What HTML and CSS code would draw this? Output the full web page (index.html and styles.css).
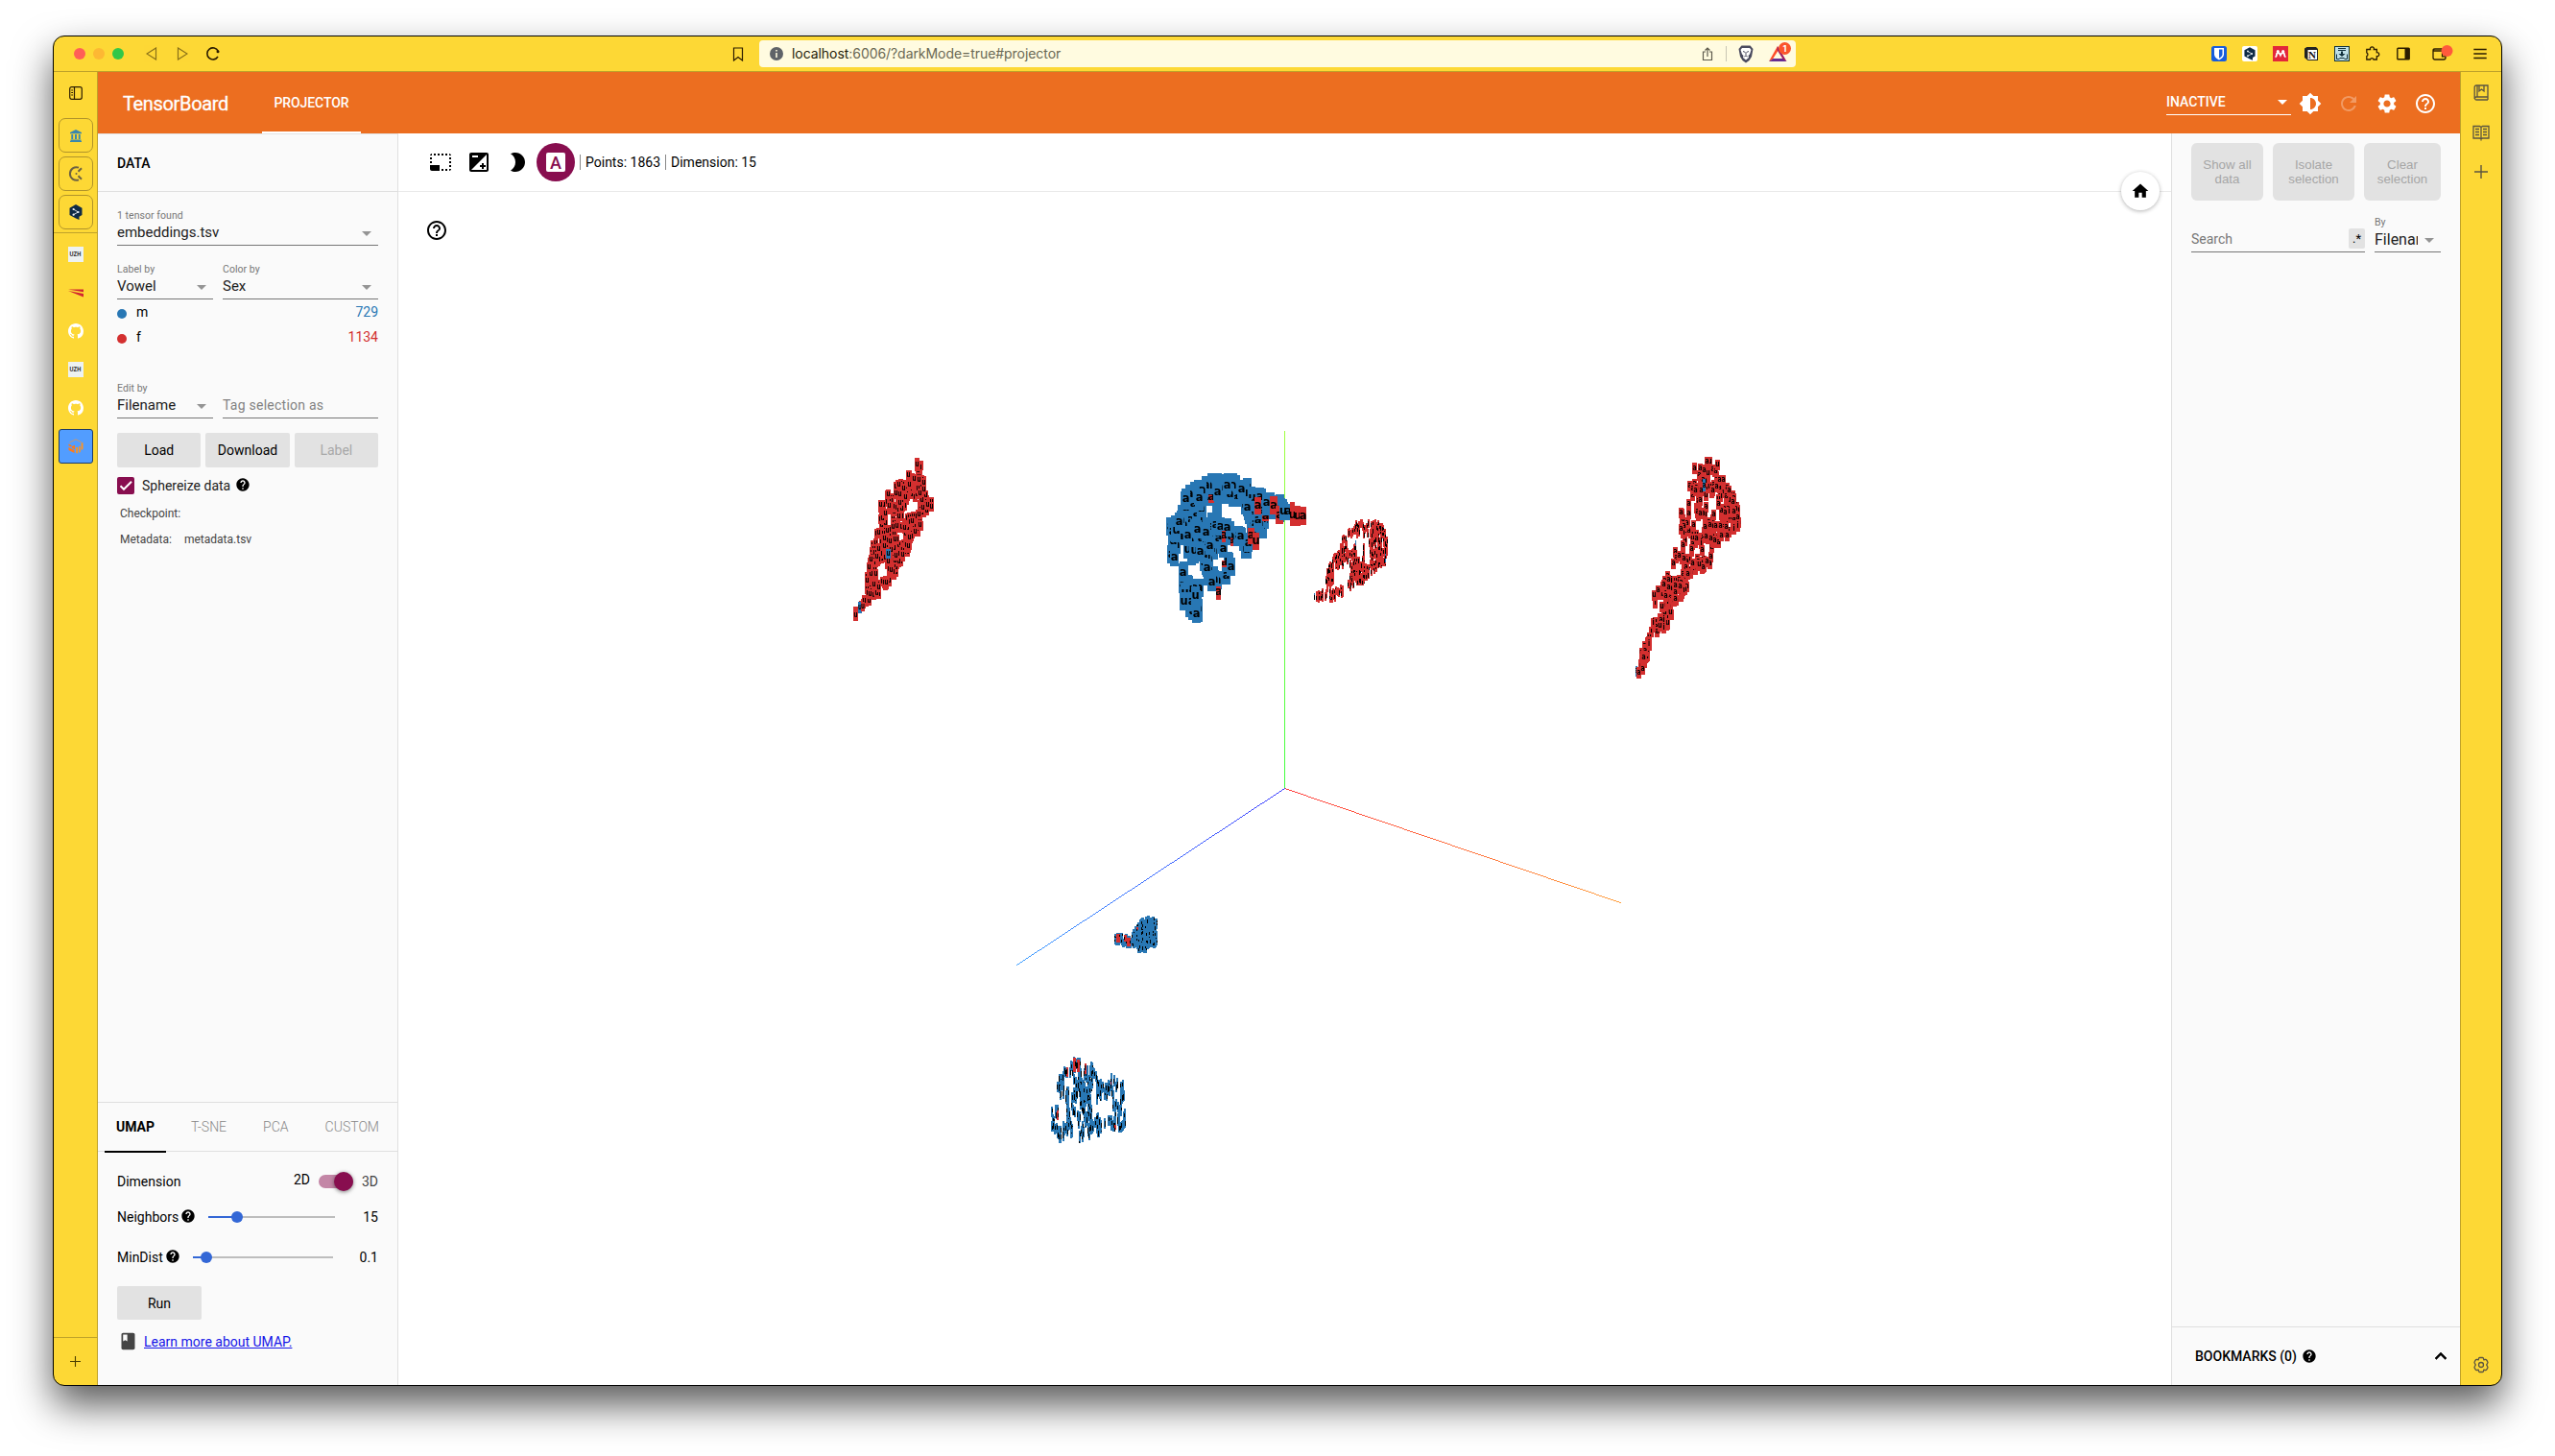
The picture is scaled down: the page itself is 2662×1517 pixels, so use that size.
FILE: index.html
```html
<!DOCTYPE html>
<html lang="en">
<head>
<meta charset="utf-8">
<title>TensorBoard</title>
<link rel="stylesheet" href="styles.css">
</head>
<body>
<svg class="defs" aria-hidden="true">
  <symbol id="help" viewBox="0 0 24 24"><path d="M12 2C6.48 2 2 6.48 2 12s4.480 10 10 10 10-4.480 10-10S17.520 2 12 2zm1 17h-2v-2h2v2zm2.070-7.750l-.9.920C13.450 12.900 13 13.500 13 15h-2v-.5c0-1.100.450-2.100 1.170-2.830l1.240-1.260c.370-.360.590-.860.590-1.410 0-1.100-.9-2-2-2s-2 .9-2 2H8c0-2.210 1.790-4 4-4s4 1.790 4 4c0 .880-.360 1.680-.930 2.250z"/></symbol>
  <symbol id="help-outline" viewBox="0 0 24 24"><path d="M11 18h2v-2h-2v2zm1-16C6.480 2 2 6.480 2 12s4.480 10 10 10 10-4.480 10-10S17.520 2 12 2zm0 18c-4.410 0-8-3.590-8-8s3.590-8 8-8 8 3.590 8 8-3.590 8-8 8zm0-14c-2.210 0-4 1.790-4 4h2c0-1.100.9-2 2-2s2 .9 2 2c0 2-3 1.750-3 5h2c0-2.250 3-2.500 3-5 0-2.210-1.790-4-4-4z"/></symbol>
  <symbol id="github" viewBox="0 0 16 16"><path d="M8 0C3.58 0 0 3.58 0 8c0 3.54 2.29 6.53 5.47 7.59.4.07.55-.17.55-.38 0-.19-.01-.82-.01-1.49-2.01.37-2.53-.49-2.69-.94-.09-.23-.48-.94-.82-1.13-.28-.15-.68-.52-.01-.53.63-.01 1.08.58 1.23.82.72 1.21 1.87.87 2.33.66.07-.52.28-.87.51-1.07-1.78-.2-3.64-.89-3.64-3.95 0-.87.31-1.59.82-2.15-.08-.2-.36-1.02.08-2.12 0 0 .67-.21 2.2.82.64-.18 1.32-.27 2-.27.68 0 1.36.09 2 .27 1.53-1.04 2.2-.82 2.2-.82.44 1.1.16 1.92.08 2.12.51.56.82 1.27.82 2.15 0 3.07-1.87 3.75-3.65 3.95.29.25.54.73.54 1.48 0 1.07-.01 1.93-.01 2.2 0 .21.15.46.55.38A8.013 8.013 0 0016 8c0-4.42-3.58-8-8-8z"/></symbol>
  <symbol id="plus" viewBox="0 0 14 14"><path d="M7 0v14M0 7h14" fill="none" stroke="currentColor" stroke-width="1.4"/></symbol>
  <symbol id="deepl" viewBox="0 0 14 16"><path d="M7 0l6.500 3.700v7.300l-3 1.800V16l-3.500-1.500L.5 11V3.700z"/><path d="M4.500 5L9.500 8l-5 2.700" fill="none" stroke="#e8edf2" stroke-width=".9"/><g fill="#e8edf2"><circle cx="4.600" cy="5" r="1.100"/><circle cx="9.500" cy="8" r="1.100"/><circle cx="4.600" cy="10.700" r="1.100"/></g></symbol>
</svg>

<div class="window">
  <header class="chrome">
    <div class="lights"><i class="red"></i><i class="amber"></i><i class="green"></i></div>
    <div class="nav">
      <svg width="12" height="14" viewBox="0 0 12 14" class="dim"><path d="M10.500 1v12L1 7z"/></svg>
      <svg width="12" height="14" viewBox="0 0 12 14" class="dim"><path d="M1.500 1v12L11 7z"/></svg>
      <svg width="16" height="16" viewBox="0 0 16 16" class="reload"><path d="M13 11A6 6 0 1 1 13.200 5.200"/><circle cx="13" cy="5.800" r="1.500" fill="#2b1c00" stroke="none"/></svg>
    </div>
    <svg class="mark" width="12" height="15" viewBox="0 0 12 15"><path d="M1.500 1h9v13L6 10.500 1.500 14z"/></svg>
    <div class="address">
      <svg width="14" height="14" viewBox="0 0 14 14"><circle cx="7" cy="7" r="7" fill="#5f6368"/><path d="M7 3v1.500M7 6v5" stroke="#fffbe0" stroke-width="1.600"/></svg>
      <span class="url"><b>localhost</b>:6006/?darkMode=true#projector</span>
      <svg class="share" width="12" height="15" viewBox="0 0 12 15"><path d="M4 5H1.500v8.500h9V5H8M6 10V1.200M3.500 3.500L6 1l2.500 2.500"/></svg>
      <i class="rule"></i>
      <svg class="lion" width="18" height="20" viewBox="0 0 18 20"><path d="M4.500 1.500h9l3 3.500-1.500 8-2.500 4L9 19.500 5.500 17 3 13 1.500 5z" fill="#4a4a5e"/><path d="M5 4h8l1.500 2-1.500 4.500-1.500 1.500.5 2L9 16.500 6 14l.5-2L5 10.500 3.500 6z" fill="#fff"/><path d="M6 7.500l2 .8M12 7.500l-2 .8M9 8v3.500M7.300 13L9 12l1.700 1" stroke="#4a4a5e" fill="none"/></svg>
      <span class="rewards"><svg width="20" height="18" viewBox="0 0 20 18"><path d="M9 1L0 17l4-2.500L10 5z" fill="#ff4f2a"/><path d="M0 17h18.500L15 14H4.500z" fill="#662d91"/><path d="M9 1l9.500 16-4-2.500L8.500 5z" fill="#9e1f63"/></svg><em>1</em></span>
    </div>
    <div class="extensions">
      <svg width="16" height="16" viewBox="0 0 16 16"><rect width="16" height="16" rx="2.500" fill="#175ddc"/><path d="M3 2h10v6.500c0 3-3 5-5 6-2-1-5-3-5-6z" fill="#fff"/><path d="M8 3.500h3.500v5c0 2-2 3.500-3.500 4.300z" fill="#175ddc"/></svg>
      <svg width="16" height="16" viewBox="0 0 16 16"><rect width="16" height="16" rx="2" fill="#fff"/><use href="#deepl" x="2" y="1" width="12" height="14" fill="#0f2b46"/></svg>
      <svg width="16" height="16" viewBox="0 0 16 16"><rect width="16" height="16" fill="#e3263a"/><path d="M2.500 11.500q1.500-.5 1.500-3 0-1.500 1.500-1.500T8 9.500Q9 7 10.500 7T12 8.500q0 2.500 1.500 3" fill="none" stroke="#fff" stroke-width="1.800"/><circle cx="5.300" cy="5.500" r="1.500" fill="#fff"/><circle cx="10.700" cy="5.500" r="1.500" fill="#fff"/></svg>
      <svg width="16" height="16" viewBox="0 0 16 16"><path d="M1 2.500L3.500 1H13l2 2v12H4.500L1 12z" fill="#222"/><path d="M4.500 4H14v10H4.500z" fill="#fff"/><text x="5" y="13" font-size="11" class="notion">N</text></svg>
      <svg width="16" height="16" viewBox="0 0 16 16"><rect x=".5" y=".5" width="15" height="15" fill="#bfe0e6" stroke="#12323d"/><path d="M4 2.500h8M4 4.500h8M2.500 8.500v5h3M13.500 8.500v5h-3M5.500 12.500h5" fill="none" stroke="#12323d"/><path d="M7 5.500h2V8h2.500L8 11 4.500 8H7z" fill="#12323d"/></svg>
      <svg width="16" height="16" viewBox="0 0 16 16" class="line"><path d="M1.800 3.500h3.700a2 2 0 1 1 3.800 0h3v3.200a2 2 0 1 1 0 3.900V14H9a1.800 1.800 0 0 0-3.500 0H1.800v-3.500a2 2 0 0 0 0-3.600z"/></svg>
      <svg width="16" height="16" viewBox="0 0 16 16"><rect x="1.800" y="2.300" width="12.400" height="11.400" rx=".8" fill="none" stroke="#2b1c00" stroke-width="1.400"/><path d="M9.500 2.300h4.700v11.400H9.500z" fill="#2b1c00"/></svg>
      <svg width="22" height="18" viewBox="0 0 22 18" class="wallet"><path d="M1 5.500C1 4 2 4 3 4h9v2M1 5.500V13c0 1.500.8 2 2 2h9c1.500 0 2-.5 2-2V6H1M14 9h-3.500v2.800H14" class="w"/><circle cx="15.500" cy="6" r="6" fill="#ff5a3c"/></svg>
      <svg width="14" height="12" viewBox="0 0 14 12" class="line burger"><path d="M.3 1.500h13.400M.3 6h13.400M.3 10.500h13.400"/></svg>
    </div>
  </header>

  <div class="below">
    <nav class="strip">
      <svg class="panel-icon" width="14" height="14" viewBox="0 0 14 14"><rect x=".7" y=".7" width="12.600" height="12.600" rx="2"/><path d="M5.500 1v12M2.200 4H4M2.200 6.500H4M2.200 9H4"/></svg>
      <div class="pins">
        <span><svg width="12" height="13" viewBox="0 0 12 13" fill="#3a87ad"><path d="M6 0l6 3v1.300H0V3zM1.300 5h1.900v5H1.300zM5 5h2v5H5zM8.800 5h1.900v5H8.800zM.5 10.500h11V12H12v1H0v-1h.5z"/></svg></span>
        <span><svg width="16" height="16" viewBox="0 0 16 16" fill="none" stroke="#6d6242" stroke-width="2"><path d="M11 1.600A6.800 6.800 0 1 0 11 14.400"/><path d="M10.500 5.800L14 2.300M10.500 10.200l3.500 3.500"/><circle cx="8.500" cy="8" r="1" fill="#6d6242" stroke="none"/></svg></span>
        <span><svg width="14" height="16" fill="#0f2b46"><use href="#deepl"/></svg></span>
      </div>
      <div class="tabs">
        <span class="uzh">UZH</span>
        <svg width="16" height="16" viewBox="0 0 16 16" fill="#d22630"><path d="M0 4.500h16v2.800zM0 6l16 3v3.500z"/></svg>
        <svg width="16" height="16" fill="#fff"><use href="#github"/></svg>
        <span class="uzh">UZH</span>
        <svg width="16" height="16" fill="#fff"><use href="#github"/></svg>
      </div>
      <span class="current"><svg width="16" height="16" viewBox="0 0 16 16"><path d="M1.500 4L8 .8l6.500 3.500V6" fill="none" stroke="#d9965a" stroke-width=".9"/><path d="M.5 5.500l3 1.500v1.800l-3-1.500zM.5 9l6 3v3l-6-3zM4 8l3-1.300v4.600l-3-1.500z" fill="#ff7a1a"/><path d="M8.200 9h1.900v6.500L8.200 15zM11.200 8h1.600v6l-1.600.8zM13.600 5l1.900-.8V11l-1.900 1z" fill="#ff941f"/></svg></span>
      <div class="newtab"><svg width="11" height="11"><use href="#plus"/></svg></div>
    </nav>

    <div class="app">
      <header class="topbar">
        <div class="brand">TensorBoard</div>
        <div class="plugin">PROJECTOR</div>
        <div class="status"><span>INACTIVE</span><i class="caret"></i></div>
        <svg width="24" height="24" viewBox="0 0 24 24"><path d="M20 15.310L23.310 12 20 8.690V4h-4.690L12 .690 8.690 4H4v4.690L.690 12 4 15.310V20h4.690L12 23.310 15.310 20H20v-4.690zM12 18V6c3.310 0 6 2.690 6 6s-2.690 6-6 6z"/></svg>
        <svg class="faded" width="24" height="24" viewBox="0 0 24 24"><path d="M17.650 6.350C16.200 4.900 14.210 4 12 4c-4.420 0-7.990 3.580-7.990 8s3.570 8 7.990 8c3.730 0 6.840-2.550 7.730-6h-2.080c-.820 2.330-3.040 4-5.650 4-3.310 0-6-2.690-6-6s2.690-6 6-6c1.660 0 3.140.690 4.220 1.780L13 11h7V4l-2.350 2.350z"/></svg>
        <svg width="24" height="24" viewBox="0 0 24 24"><path d="M19.140 12.940c.040-.3.060-.610.060-.940 0-.320-.020-.640-.070-.940l2.030-1.580c.180-.140.230-.410.120-.610l-1.920-3.320c-.120-.220-.370-.290-.590-.220l-2.390.960c-.5-.380-1.030-.7-1.620-.940l-.360-2.540c-.040-.240-.240-.410-.480-.410h-3.840c-.240 0-.430.170-.470.410l-.360 2.540c-.590.240-1.130.570-1.620.940l-2.390-.960c-.220-.080-.470 0-.590.220L2.740 8.870c-.120.210-.080.470.120.610l2.030 1.580c-.050.3-.090.630-.090.940s.020.640.070.940l-2.030 1.580c-.180.140-.230.410-.120.610l1.920 3.320c.120.220.370.290.590.220l2.390-.960c.5.380 1.030.7 1.620.940l.360 2.540c.050.240.240.410.480.410h3.840c.240 0 .440-.170.470-.410l.360-2.540c.590-.240 1.130-.560 1.620-.940l2.390.960c.220.080.470 0 .590-.220l1.920-3.320c.120-.220.070-.470-.120-.610l-2.010-1.580zM12 15.600c-1.980 0-3.600-1.620-3.600-3.600s1.620-3.600 3.600-3.600 3.600 1.620 3.600 3.600-1.620 3.600-3.600 3.600z"/></svg>
        <svg width="24" height="24"><use href="#help-outline"/></svg>
      </header>

      <div class="projector">
        <aside class="left">
          <h2 class="heading">DATA</h2>
          <div class="data">
            <div class="field f1"><label>1 tensor found</label><div class="select">embeddings.tsv<i class="caret"></i></div></div>
            <div class="pair">
              <div class="field narrow"><label>Label by</label><div class="select">Vowel<i class="caret"></i></div></div>
              <div class="field wide"><label>Color by</label><div class="select">Sex<i class="caret"></i></div></div>
            </div>
            <div class="legend m"><i></i><span>m</span><b>729</b></div>
            <div class="legend f"><i></i><span>f</span><b>1134</b></div>
            <div class="pair edit">
              <div class="field narrow"><label>Edit by</label><div class="select">Filename<i class="caret"></i></div></div>
              <div class="field wide"><label></label><div class="select hint">Tag selection as</div></div>
            </div>
            <div class="buttons"><button>Load</button><button>Download</button><button disabled>Label</button></div>
            <div class="sphere"><span class="check"><svg width="18" height="18" viewBox="0 0 18 18"><path d="M3.500 9.300l3.500 3.500L15 4.800" fill="none" stroke="#fff" stroke-width="2"/></svg></span><span>Sphereize data</span><svg class="tip" width="16" height="16"><use href="#help"/></svg></div>
            <div class="meta">Checkpoint:</div>
            <div class="meta"><span>Metadata:</span><span>metadata.tsv</span></div>
          </div>
          <div class="projections">
            <div class="ptabs"><span class="on">UMAP</span><span>T-SNE</span><span>PCA</span><span>CUSTOM</span></div>
            <div class="row dim-row"><span>Dimension</span><span class="d2">2D</span><i class="toggle"></i><span class="d3">3D</span></div>
            <div class="row nb"><span>Neighbors</span><svg class="tip" width="16" height="16"><use href="#help"/></svg><i class="slider"><b></b></i><span class="val">15</span></div>
            <div class="row md"><span>MinDist</span><svg class="tip" width="16" height="16"><use href="#help"/></svg><i class="slider"><b></b></i><span class="val">0.1</span></div>
            <button class="run">Run</button>
            <div class="learn"><svg width="21" height="21" viewBox="0 0 24 24"><path d="M18 2H6c-1.100 0-2 .9-2 2v16c0 1.100.9 2 2 2h12c1.100 0 2-.9 2-2V4c0-1.100-.9-2-2-2zM6 4h5v8l-2.500-1.500L6 12V4z"/></svg><a href="#">Learn more about UMAP.</a></div>
          </div>
        </aside>

        <main class="stage">
          <div class="tools">
            <svg width="24" height="24" viewBox="0 0 24 24"><path d="M23 15h-2v2h2v-2zm0-4h-2v2h2v-2zm0 8h-2v2c1 0 2-1 2-2zM15 3h-2v2h2V3zm8 4h-2v2h2V7zm-2-4v2h2c0-1-1-2-2-2zM3 21h8v-6H1v4c0 1.100.9 2 2 2zM3 7H1v2h2V7zm12 12h-2v2h2v-2zm4-16h-2v2h2V3zm0 16h-2v2h2v-2zM3 3C2 3 1 4 1 5h2V3zm0 8H1v2h2v-2zm8-8H9v2h2V3zM7 3H5v2h2V3z"/></svg>
            <svg width="24" height="24" viewBox="0 0 24 24"><path d="M15 17v2h2v-2h2v-2h-2v-2h-2v2h-2v2h2zm5-15H4c-1.100 0-2 .9-2 2v16c0 1.100.9 2 2 2h16c1.100 0 2-.9 2-2V4c0-1.100-.9-2-2-2zM5 5h6v2H5V5zm15 15H4L20 4v16z"/></svg>
            <svg width="24" height="24" viewBox="0 0 24 24"><path d="M10 2c-1.820 0-3.530.5-5 1.350C7.990 5.080 10 8.300 10 12s-2.010 6.920-5 8.650C6.470 21.500 8.180 22 10 22c5.520 0 10-4.480 10-10S15.520 2 10 2z"/></svg>
            <span class="labels3d"><b>A</b></span>
            <span class="stat">Points: 1863</span><span class="stat">Dimension: 15</span>
          </div>
          <div class="plot">
            <canvas id="scatter" width="1847" height="1243"></canvas>
            <svg class="about" width="24" height="24"><use href="#help-outline"/></svg>
            <span class="home"><svg width="20" height="20" viewBox="0 0 24 24"><path d="M10 20v-6h4v6h5v-8h3L12 3 2 12h3v8z"/></svg></span>
          </div>
        </main>

        <aside class="right">
          <div class="actions"><button>Show all<br>data</button><button>Isolate<br>selection</button><button>Clear<br>selection</button></div>
          <div class="query">
            <div class="search"><span>Search</span><kbd>.*</kbd></div>
            <div class="field by"><label>By</label><div class="select"><span>Filename</span><i class="caret"></i></div></div>
          </div>
          <div class="bookmarks"><span>BOOKMARKS (0)</span><svg class="tip" width="16" height="16"><use href="#help"/></svg><svg class="up" width="24" height="24" viewBox="0 0 24 24"><path d="M12 8l-6 6 1.410 1.410L12 10.830l4.590 4.580L18 14z" stroke="#000" stroke-width=".6"/></svg></div>
        </aside>
      </div>
    </div>

    <nav class="sidebar">
      <svg width="16" height="17" viewBox="0 0 16 17"><path d="M15 13H3a1.500 1.500 0 0 0 0 3h12M15 16V1H3C2 1 1.200 1.500 1.200 3v12M4 13V1M6 1v6l2.500-2L11 7V1"/></svg>
      <svg width="18" height="17" viewBox="0 0 18 17"><path d="M9 2.500v14M1 1.500h6.500L9 2.500l1.500-1H17v12.500h-6.500L9 15l-1.500-1H1zM3 4.500h4M3 7.500h4M3 10.500h4M11 4.500h4M11 7.500h4M11 10.500h4"/></svg>
      <svg width="14" height="14"><use href="#plus"/></svg>
      <svg class="prefs" width="18" height="18" viewBox="0 0 18 18"><path d="M6.500 2.500Q6.600 1.500 7.500 1.500h3q.9 0 1 1l.3 1.300 1.500-.3q1-.2 1.500.6l1 1.700q.5.8-.2 1.600L14.700 9l.9 1.600q.7.800.2 1.600l-1 1.700q-.5.800-1.500.6l-1.500-.3-.3 1.300q-.1 1-1 1h-3q-.9 0-1-1l-.3-1.300-1.500.3q-1 .2-1.500-.6l-1-1.700q-.5-.8.2-1.600L3.300 9l-.9-1.600q-.7-.8-.2-1.600l1-1.700q.5-.8 1.500-.6l1.500.3z"/><circle cx="9" cy="9" r="2.500"/></svg>
    </nav>
  </div>
</div>
<script src="scatter.js"></script>
</body>
</html>
```

FILE: styles.css
```css
* { box-sizing: border-box; }
body { margin: 0; width: 2662px; height: 1517px; overflow: hidden; background: #fff; padding: 37px 55px; font: 14px Roboto, sans-serif; color: #000; }
svg { display: block; flex: none; }
i, em { font-style: normal; }
.defs { position: absolute; width: 0; height: 0; }

.window { width: 2552px; height: 1407px; border: 1px solid #000; border-radius: 12px; overflow: hidden; display: flex; flex-direction: column; background: #fdd835; box-shadow: 0 20px 40px rgba(0,0,0,.65); }

/* browser chrome */
.chrome { height: 37px; flex: none; border-bottom: 1px solid #bfa22a; display: flex; align-items: center; padding-left: 21px; }
.lights { display: flex; gap: 8px; }
.lights i { width: 12px; height: 12px; border-radius: 50%; }
.red { background: #ff5f57; } .amber { background: #fdb833; } .green { background: #33c748; }
.nav { display: flex; align-items: center; gap: 20px; margin-left: 23px; fill: none; stroke: #2b1c00; }
.nav svg { stroke-width: 1.2; }
.nav .dim { opacity: .55; }
.nav .reload { stroke-width: 1.6; margin-left: -2px; }
.mark { margin-left: 533px; fill: none; stroke: #2b1c00; stroke-width: 1.2; }
.address { margin-left: 16px; width: 1080px; height: 28px; border-radius: 4px; background: #fffbe0; display: flex; align-items: center; padding-left: 11px; }
.url { margin-left: 9px; font: 14px/28px Inter, sans-serif; color: #6a6854; letter-spacing: -.06px; flex: 1; }
.url b { font-weight: 400; color: #1f1b08; }
.share { fill: none; stroke: #5d5a4c; stroke-width: 1.2; }
.rule { width: 1px; height: 16px; background: #c9c6b4; margin: 0 11px 0 13px; }
.rewards { position: relative; margin: 0 8px 0 15px; }
.rewards em { position: absolute; left: 10px; top: -3px; width: 13px; height: 13px; border-radius: 50%; background: #fb542b; color: #fff; font: 700 9px/13px Inter, sans-serif; text-align: center; }
.extensions { display: flex; gap: 16px; margin-left: 433px; align-items: center; }
.line, .w { fill: none; stroke: #2b1c00; stroke-width: 1.3; }
.wallet { margin-left: 6px; }
.burger { margin-left: 5px; }
.notion { font-family: "Liberation Serif", serif; font-weight: 700; fill: #111; }

.below { flex: 1; display: flex; min-height: 0; }
.strip { width: 46px; border-right: 1px solid #bfa22a; display: flex; flex-direction: column; align-items: center; padding-top: 15px; }
.panel-icon { fill: none; stroke: #2b1c00; stroke-width: 1.2; }
.pins { align-self: stretch; margin-top: 19px; display: flex; flex-direction: column; align-items: center; gap: 4px; padding-bottom: 3px; border-bottom: 1px solid #bfa22a; }
.pins span { width: 36px; height: 36px; border: 1px solid #b0932a; border-radius: 7px; display: grid; place-items: center; }
.tabs { display: flex; flex-direction: column; align-items: center; gap: 24px; margin-top: 14px; }
.uzh { width: 16px; height: 16px; background: #edf2f2; color: #222; font: 700 5.500px/16px Inter, sans-serif; text-align: center; }
.current { margin-top: 14px; width: 36px; height: 36px; border: 1px solid #1f3c66; border-radius: 3px; background: #529dff; display: grid; place-items: center; }
.newtab { margin-top: auto; align-self: stretch; height: 50px; border-top: 1px solid #bfa22a; display: grid; place-items: center; color: #4a3d00; }
.sidebar { width: 43px; border-left: 1px solid #bfa22a; display: flex; flex-direction: column; align-items: center; padding: 13px 0 12px; gap: 25px; fill: none; stroke: #5b5440; stroke-width: 1.3; color: #5b5440; }
.prefs { margin-top: auto; }

/* TensorBoard header */
.app { flex: 1; display: flex; flex-direction: column; min-width: 0; }
.topbar { height: 64px; background: #ec6e20; color: #fff; fill: #fff; display: flex; align-items: center; padding: 2px 24px 0 26px; }
.brand { font-size: 20px; width: 145px; letter-spacing: -.35px; -webkit-text-stroke: .3px; margin-top: -1px; }
.plugin { width: 103px; height: 62px; line-height: 61px; text-align: center; font-weight: 500; letter-spacing: -.1px; border-bottom: 2px solid #fff; }
.status { width: 130px; height: 30px; border-bottom: 1px solid #fff; margin: -6px 8px 0 auto; display: flex; align-items: center; font-weight: 500; }
.status span { padding-top: 2px; }
.topbar svg + svg { margin-left: 16px; }
.faded { opacity: .3; }
.caret { border: 5px solid transparent; border-top-color: currentColor; border-bottom: 0; margin: 0 7px 0 auto; }
.status .caret { margin-right: 4px; margin-top: 3px; }

.projector { flex: 1; display: flex; min-height: 0; }
.left { width: 313px; background: #fafafa; border-right: 1px solid #dfdfdf; border-top: 1px solid #e4e4e4; display: flex; flex-direction: column; }
.heading { margin: 0; height: 60px; border-bottom: 1px solid #dfdfdf; padding-left: 20px; font: 500 14px/61px Roboto, sans-serif; }
.data { padding: 16px 20px 0; }
.field label { display: block; height: 16px; font-size: 10.500px; line-height: 18px; color: #777; letter-spacing: .05px; }
.select { height: 24px; border-bottom: 1px solid #757575; padding-bottom: 3px; font-size: 15px; color: #212121; display: flex; align-items: center; white-space: nowrap; }
.select .caret { color: #949494; margin-top: 3px; }
.hint { color: #828282; font-size: 14px; letter-spacing: .25px; }
.pair { display: flex; gap: 10px; margin-top: 16px; }
.narrow { width: 100px; } .wide { width: 162px; }
.legend { height: 26px; display: flex; align-items: center; }
.legend i { width: 10px; height: 10px; border-radius: 50%; margin: 3px 10px 0 0; }
.legend b { font-weight: 400; margin-left: auto; }
.m i { background: #2877b4; } .m b { color: #2877b4; } .f i { background: #d32f2f; } .f b { color: #d32f2f; }
.edit { margin-top: 32px; }
button { border: 0; padding: 0; margin: 0; background: #e2e2e2; border-radius: 2px; color: #000; font: 14px Roboto, sans-serif; }
.buttons { display: flex; gap: 5px; margin-top: 15px; }
.buttons button { flex: 1; height: 36px; }
button:disabled { color: #a8a8a8; }
.sphere { display: flex; align-items: center; height: 18px; margin-top: 10px; color: #212121; }
.check { background: #880e4f; border-radius: 2px; margin-right: 8px; }
.tip { margin: -3px 0 0 5px; }
.meta { height: 27px; line-height: 27px; font-size: 12px; color: #444; padding-left: 3px; margin-top: 7px; display: flex; gap: 13px; }
.meta + .meta { margin-top: 0; }

.projections { margin-top: auto; height: 295px; border-top: 1px solid #dfdfdf; }
.ptabs { height: 51px; border-bottom: 1px solid #dfdfdf; display: flex; padding: 0 19px 0 19px; justify-content: space-between; line-height: 51px; color: #888; font-weight: 300; }
.ptabs .on { color: #000; font-weight: 700; height: 52px; border-bottom: 2px solid #000; margin-left: -12px; padding: 0 12px; margin-right: -12px; z-index: 1; }
.row { display: flex; align-items: center; height: 36px; padding: 0 20px; }
.dim-row { margin-top: 13px; }
.d2 { margin: -5px 9px 0 auto; }
.toggle { width: 36px; height: 14px; border-radius: 7px; background: #c386a6; margin-right: 9px; display: flex; align-items: center; justify-content: flex-end; }
.toggle::after { content: ""; width: 20px; height: 20px; border-radius: 50%; background: #880e4f; box-shadow: 0 1px 4px rgba(0,0,0,.5); }
.d3 { color: #444; }
.row .tip { margin-left: 2px; }
.slider { height: 2px; background: #bdbdbd; margin-left: 13px; display: flex; align-items: center; }
.slider b { width: 12px; height: 12px; border-radius: 50%; background: #3367d6; flex: none; }
.nb { margin-top: 1px; }
.nb .slider { width: 132px; background: linear-gradient(90deg, #3367d6 30px, #bdbdbd 30px); } .nb b { margin-left: 24px; }
.md .slider { width: 146px; background: linear-gradient(90deg, #3367d6 14px, #bdbdbd 14px); } .md b { margin-left: 8px; }
.md { margin-top: 6px; }
.val { margin-left: auto; }
.run { display: block; width: 88px; height: 35px; margin: 12px 0 0 20px; }
.learn { display: flex; align-items: center; margin: 12px 0 0 21px; gap: 6px; fill: #444; }
.learn a { color: #1515e8; }

/* centre */
.stage { flex: 1; display: flex; flex-direction: column; background: #fff; min-width: 0; }
.tools { height: 61px; border-bottom: 1px solid #eaeaea; display: flex; align-items: center; padding-left: 32px; gap: 16px; }
.labels3d { width: 40px; height: 40px; border-radius: 50%; background: #880e4f; display: grid; place-items: center; margin-left: -8px; }
.labels3d b { width: 20px; height: 20px; border-radius: 2px; background: #fff; color: #880e4f; font: 500 18px/21px Roboto, sans-serif; text-align: center; }
.stat { border-left: 1px solid #888; line-height: 16px; padding-left: 5px; margin-left: -11px; }
.plot { position: relative; height: 1243px; }
#scatter { display: block; }
.about { position: absolute; left: 28px; top: 28px; }
.home { position: absolute; left: 1795px; top: -21px; width: 40px; height: 40px; border-radius: 50%; background: #fff; display: grid; place-items: center; box-shadow: 0 1px 4px rgba(0,0,0,.3); }

.right { width: 301px; border-left: 1px solid #dfdfdf; background: #fafafa; display: flex; flex-direction: column; }
.actions { display: flex; gap: 10px; padding: 10px 20px 0; }
.actions button { height: 60px; border-radius: 6px; color: #a6a6a6; font: 13.300px/15px "Liberation Sans", sans-serif; width: 80px; }
.actions button:nth-child(1) { width: 75px; }
.actions button:nth-child(2) { width: 85px; }
.query { display: flex; gap: 10px; padding: 14px 20px 0; align-items: flex-end; }
.search { width: 181px; height: 27px; border-bottom: 1px solid #757575; color: #777; display: flex; align-items: center; justify-content: space-between; }
kbd { width: 17px; height: 21px; margin-top: -1px; border-radius: 2px; background: #e2e2e2; color: #000; font: 13px/21px Roboto, sans-serif; text-align: center; }
.by { width: 69px; }
.by .select span { width: 45px; overflow: hidden; font-size: 16px; }
.bookmarks { margin-top: auto; height: 61px; border-top: 1px solid #dfdfdf; display: flex; align-items: center; padding: 0 8px 0 24px; font-weight: 500; }
.bookmarks .tip { margin-top: -1px; }
.bookmarks .up { margin-left: auto; }
```

FILE: scatter.js
```js
const ctx = document.getElementById('scatter').getContext('2d');
const BLUE = '#2877b4', RED = '#d32f2f';
let seed = 7;
const rnd = () => (seed = (seed * 16807) % 2147483647) / 2147483647;

// World axes, stepped one pixel at a time so that they stay crisp
function axis(x, y, from, to) {
  const x0 = 923, y0 = 621, n = Math.max(Math.abs(x - x0), Math.abs(y - y0));
  for (let i = 0; i <= n; i++) {
    const t = i / n;
    ctx.fillStyle = `rgb(${from.map((v, k) => Math.round(v + (to[k] - v) * t))})`;
    ctx.fillRect(Math.round(x0 + (x - x0) * t), Math.round(y0 + (y - y0) * t), 1, 1);
  }
}
axis(923, 249, [64, 255, 64], [160, 255, 64]);
axis(1273, 740, [255, 64, 64], [255, 160, 64]);
axis(644, 805, [64, 64, 255], [64, 160, 255]);

function inside(p, x, y) {
  let c = false;
  for (let i = 0, j = p.length - 2; i < p.length; j = i, i += 2) {
    if ((p[i + 1] > y) !== (p[j + 1] > y) &&
        x < (p[j] - p[i]) * (y - p[i + 1]) / (p[j + 1] - p[i + 1]) + p[i]) c = !c;
  }
  return c;
}

// Every cluster works in third-of-a-pixel units from its own origin.
function cluster(c) {
  const [w, h] = c.sprite;
  const px = v => Math.round(v / 3);
  const sprite = (x, y, color, sw, sh) => {
    const X = c.x - 415 + px(x), Y = c.y - 200 + px(y), W = px(sw), H = px(sh);
    ctx.fillStyle = color;
    ctx.fillRect(X, Y, W, H);
    ctx.fillStyle = '#000';
    if (c.tick) {
      if (rnd() < c.tick) ctx.fillRect(X + (rnd() < .5 ? 0 : W - 1), Y + px(h * (.12 + rnd() * .3)), 1, Math.max(2, px(h * (.3 + rnd() * .3))));
      return;
    }
    ctx.save();
    ctx.beginPath();
    ctx.rect(X, Y, W, H);
    ctx.clip();
    ctx.translate(X + W / 2, Y + Math.round(H * .66));
    ctx.scale(c.squeeze, 1);
    ctx.font = '700 ' + c.font + 'px "DejaVu Sans"';
    ctx.textAlign = 'center';
    ctx.fillText(c.letters[Math.floor(rnd() * c.letters.length)], 0, 0);
    ctx.restore();
  };
  const p = c.outline;
  let l = 1e9, r = 0, t = 1e9, b = 0;
  for (let i = 0; i < p.length; i += 2) {
    l = Math.min(l, p[i]); r = Math.max(r, p[i]);
    t = Math.min(t, p[i + 1]); b = Math.max(b, p[i + 1]);
  }
  let n = 0;
  const slack = c.slack || .22;
  for (let k = 0; k < 60000 && n < c.count; k++) {
    const x = l + rnd() * (r - l - w), y = t + rnd() * (b - t - h);
    const m = w * slack, q = h * slack;
    if (!inside(p, x + m, y + q) || !inside(p, x + w - m, y + q) ||
        !inside(p, x + m, y + h - q) || !inside(p, x + w - m, y + h - q)) continue;
    if (c.holes.some(o => x < o[2] && x + w > o[0] && y < o[3] && y + h > o[1])) continue;
    sprite(x, y, c.color, w, h);
    n++;
  }
  c.marks.forEach(o => sprite(o[0], o[1], o[4] || (c.color === RED ? BLUE : RED), o[2], o[3]));
}

cluster({ x: 870, y: 460, sprite: [14, 30], font: 9, squeeze: .62, letters: 'uuuu', color: RED, count: 420,
  outline: [252,52,272,52,274,100,283,110,283,135,292,150,292,170,309,175,309,208,300,222,286,245,272,250,272,275,262,303,245,303,240,325,235,355,218,358,215,378,198,395,198,430,186,432,168,455,142,480,142,497,118,495,110,510,90,530,75,562,55,562,55,528,75,500,95,475,96,395,110,350,114,310,125,275,140,265,135,230,138,190,150,162,175,150,192,123,215,123,222,90,236,90,240,105,252,100],
  holes: [[232,192,252,214],[166,228,171,258],[135,394,154,420],[204,285,208,310]],
  marks: [[158,335,15,30],[84,482,16,34,RED],[71,502,12,36],[82,500,12,30,RED],[57,528,16,32,RED]] });

cluster({ x: 1200, y: 440, sprite: [26, 56], font: 13, squeeze: .88, letters: 'aaaaaaau', color: BLUE, count: 300,
  outline: [162,168,190,160,218,154,267,154,274,175,308,175,310,210,345,215,368,220,400,235,430,250,430,305,405,305,370,292,360,325,355,358,335,370,308,380,305,417,280,417,278,385,238,372,236,405,264,408,264,467,240,470,238,504,210,510,204,549,176,549,172,517,156,510,160,590,152,632,121,632,113,600,88,590,86,444,60,442,50,425,48,392,43,340,53,301,73,300,73,262,88,255,90,213,108,203,132,191],
  holes: [[172,262,184,282],[220,256,236,294],[262,278,276,320],[278,305,288,322],[91,392,97,415],[192,432,214,448],[124,448,144,468]],
  marks: [[178,226,18,26],[192,188,26,56,BLUE],[320,234,22,54],[344,222,26,56,BLUE],[370,232,24,58],[388,262,24,56],[398,248,24,56,BLUE],[420,256,12,50,BLUE],[432,250,16,76],[446,260,18,62],[462,264,21,56],[300,330,20,52],[314,345,22,54],[219,340,12,36],[246,360,10,26],[202,514,14,42],[344,290,20,18],[218,432,14,20]] });

cluster({ x: 1200, y: 440, sprite: [7, 28], tick: .9, slack: .28, color: RED, count: 360,
  outline: [655,300,700,303,730,330,740,370,738,440,705,460,692,472,667,500,635,512,600,542,560,564,508,568,508,531,535,526,580,518,610,503,618,490,590,470,572,490,566,515,545,518,546,433,573,416,588,400,590,356,608,352,618,335,632,312],
  holes: [[578,462,618,492],[628,366,676,376],[614,372,628,392],[646,398,658,416],[668,402,680,440],[606,446,616,458]],
  marks: [[728,410,4,28],[636,370,4,14],[508,533,4,12]] });

cluster({ x: 1690, y: 460, sprite: [15, 34], font: 9, squeeze: .68, letters: 'aaaaaiu', color: RED, count: 340,
  outline: [250,47,290,50,310,62,312,100,328,103,332,135,348,148,364,178,370,230,372,268,347,292,325,320,300,332,290,355,290,378,270,408,240,410,225,420,205,432,212,460,192,490,178,528,165,555,140,592,120,614,105,644,88,668,78,704,70,730,60,744,42,744,42,700,52,653,65,630,80,600,90,573,98,544,118,526,122,500,107,495,107,524,93,524,91,480,100,455,120,448,130,407,155,409,176,415,183,385,168,372,168,399,156,399,158,333,172,311,190,318,178,280,178,215,205,186,215,175,207,162,207,123,235,123,238,78],
  holes: [[272,188,279,222],[218,190,223,240],[295,216,299,245],[240,262,248,278],[258,328,270,344],[205,320,209,345]],
  marks: [[219,66,15,36,RED],[252,118,10,38],[74,610,18,46,RED],[64,632,18,40,RED],[56,655,20,42,RED],[52,680,20,40,RED],[42,702,5,34],[46,704,14,36,RED],[56,694,14,36,RED]] });

cluster({ x: 1080, y: 930, sprite: [9, 20], tick: .85, color: BLUE, count: 190,
  outline: [345,72,377,78,380,167,365,175,350,175,335,191,322,191,308,174,270,166,240,162,240,126,262,128,290,135,310,104,325,84],
  holes: [],
  marks: [[250,130,12,26],[273,133,9,20],[282,140,12,26],[312,107,5,8]] });

cluster({ x: 1080, y: 930, sprite: [6, 34], tick: 1, slack: .25, color: BLUE, count: 300,
  outline: [112,513,136,516,142,555,160,526,187,546,190,580,215,590,235,570,260,581,278,596,282,744,225,750,218,718,198,770,180,752,160,778,128,786,120,747,105,780,62,780,45,758,46,676,70,664,60,608,70,558,100,543],
  holes: [[88,584,108,602],[72,666,92,704],[105,644,109,700],[174,616,186,690],[200,660,236,690],[118,704,123,730],[246,627,260,636]],
  marks: [[114,516,8,46],[126,522,8,38],[150,534,6,32],[92,546,6,30],[63,682,6,30],[232,592,4,14],[243,726,6,14]] });
```
